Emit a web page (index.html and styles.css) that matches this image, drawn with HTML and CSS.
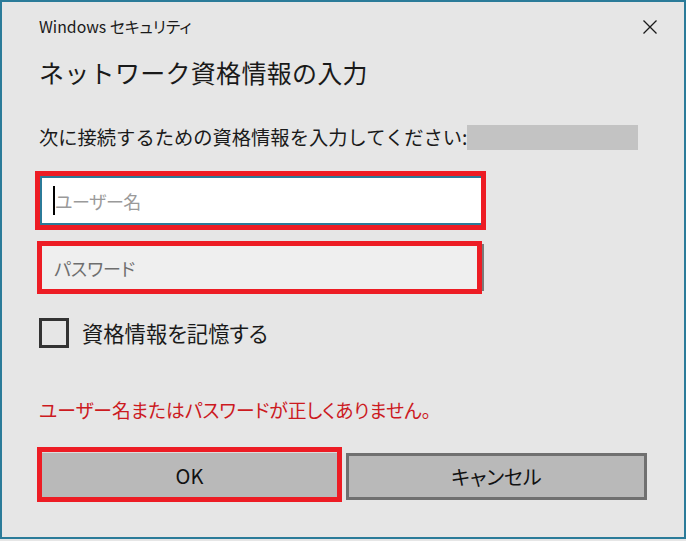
FILE: index.html
```html
<!DOCTYPE html>
<html lang="ja">
<head>
<meta charset="utf-8">
<title>Windows セキュリティ</title>
<link rel="stylesheet" href="styles.css">
</head>
<body>
<div class="window">
  <div class="titlebar">
    <span class="title">Windows セキュリティ</span>
    <svg class="close" width="14" height="14" viewBox="0 0 14 14"><path d="M0.5 0.5 L13.5 13.5 M13.5 0.5 L0.5 13.5" stroke="#1a1a1a" stroke-width="1.3" fill="none"/></svg>
  </div>
  <div class="heading">ネットワーク資格情報の入力</div>
  <div class="instruction"><span>次に接続するための資格情報を入力してください:</span><span class="redacted"></span></div>
  <div class="mark user-mark">
    <div class="input user-input"><span class="caret"></span><span class="ph ph-user">ユーザー名</span></div>
  </div>
  <div class="mark pass-mark">
    <div class="input pass-input"><span class="ph ph-pass">パスワード</span></div>
  </div>
  <div class="remember"><span class="box"></span><span class="label">資格情報を記憶する</span></div>
  <div class="error">ユーザー名またはパスワードが正しくありません。</div>
  <div class="buttons">
    <div class="mark ok-mark"><div class="btn ok">OK</div></div>
    <div class="btn cancel">キャンセル</div>
  </div>
</div>
</body>
</html>
```
FILE: styles.css
```css
html, body {
  margin: 0;
  padding: 0;
  background: #e6e6e6;
}
body {
  width: 686px;
  height: 541px;
  overflow: hidden;
  font-family: "Noto Sans CJK JP", "Noto Sans", sans-serif;
  font-feature-settings: "palt";
  color: #1a1a1a;
}
.window {
  box-sizing: border-box;
  width: 686px;
  height: 539px;
  border: 2px solid #2b7b99;
  background: #e6e6e6;
  padding-left: 37px;
}
.titlebar {
  height: 50px;
  display: flex;
  align-items: center;
  justify-content: space-between;
  padding-right: 27px;
}
.title {
  font-size: 15.8px;
  line-height: 20px;
}
.close { display: block; }
.heading {
  height: 40px;
  line-height: 40px;
  font-size: 25px;
  font-feature-settings: normal;
  letter-spacing: 0.3px;
}
.instruction {
  margin-top: 33px;
  height: 25px;
  display: flex;
  align-items: center;
  font-size: 19.3px;
  line-height: 25px;
  font-feature-settings: normal;
}
.redacted {
  display: inline-block;
  width: 171px;
  height: 25px;
  background: #c3c3c3;
}
.mark {
  box-sizing: border-box;
  border: 5px solid #ed1c24;
}
.user-mark {
  margin-top: 21px;
  margin-left: -4px;
  width: 451px;
  height: 59px;
}
.input {
  box-sizing: border-box;
  height: 100%;
  display: flex;
  align-items: center;
  font-size: 18px;
}
.user-input {
  background: #fff;
  border-top: 2px solid #2b7b99;
  border-bottom: 2px solid #2b7b99;
  border-left: 2px solid #2b7b99;
  padding-left: 11px;
}
.caret {
  display: inline-block;
  width: 2px;
  height: 29px;
  background: #000;
}
.ph-user { color: #9a9a9a; letter-spacing: -0.4px; }
.pass-mark {
  margin-top: 11px;
  margin-left: -2px;
  width: 445px;
  height: 53px;
  box-shadow: 5px 0 0 -3px #7a7a7a;
}
.pass-input {
  background: #efefef;
  padding-left: 12px;
}
.ph-pass { color: #6e6e6e; }
.remember {
  margin-top: 24px;
  height: 30px;
  display: flex;
  align-items: center;
}
.box {
  box-sizing: border-box;
  width: 30px;
  height: 30px;
  border: 3px solid #333;
}
.label {
  margin-left: 13px;
  font-size: 21.3px;
  line-height: 30px;
}
.error {
  margin-top: 50px;
  height: 24px;
  line-height: 24px;
  font-size: 18.8px;
  color: #cc1a1f;
}
.buttons {
  margin-top: 25px;
  margin-left: -2px;
  display: flex;
  align-items: flex-start;
  gap: 4px;
}
.ok-mark {
  width: 305px;
  height: 55px;
}
.btn {
  box-sizing: border-box;
  background: #b9b9b9;
  display: flex;
  align-items: center;
  justify-content: center;
  font-size: 20px;
  color: #111;
}
.ok {
  height: 100%;
  border-top: 1px solid #dcdcdc;
}
.cancel {
  margin-top: 6px;
  width: 301px;
  height: 47px;
  border: 3px solid #707070;
}
```
